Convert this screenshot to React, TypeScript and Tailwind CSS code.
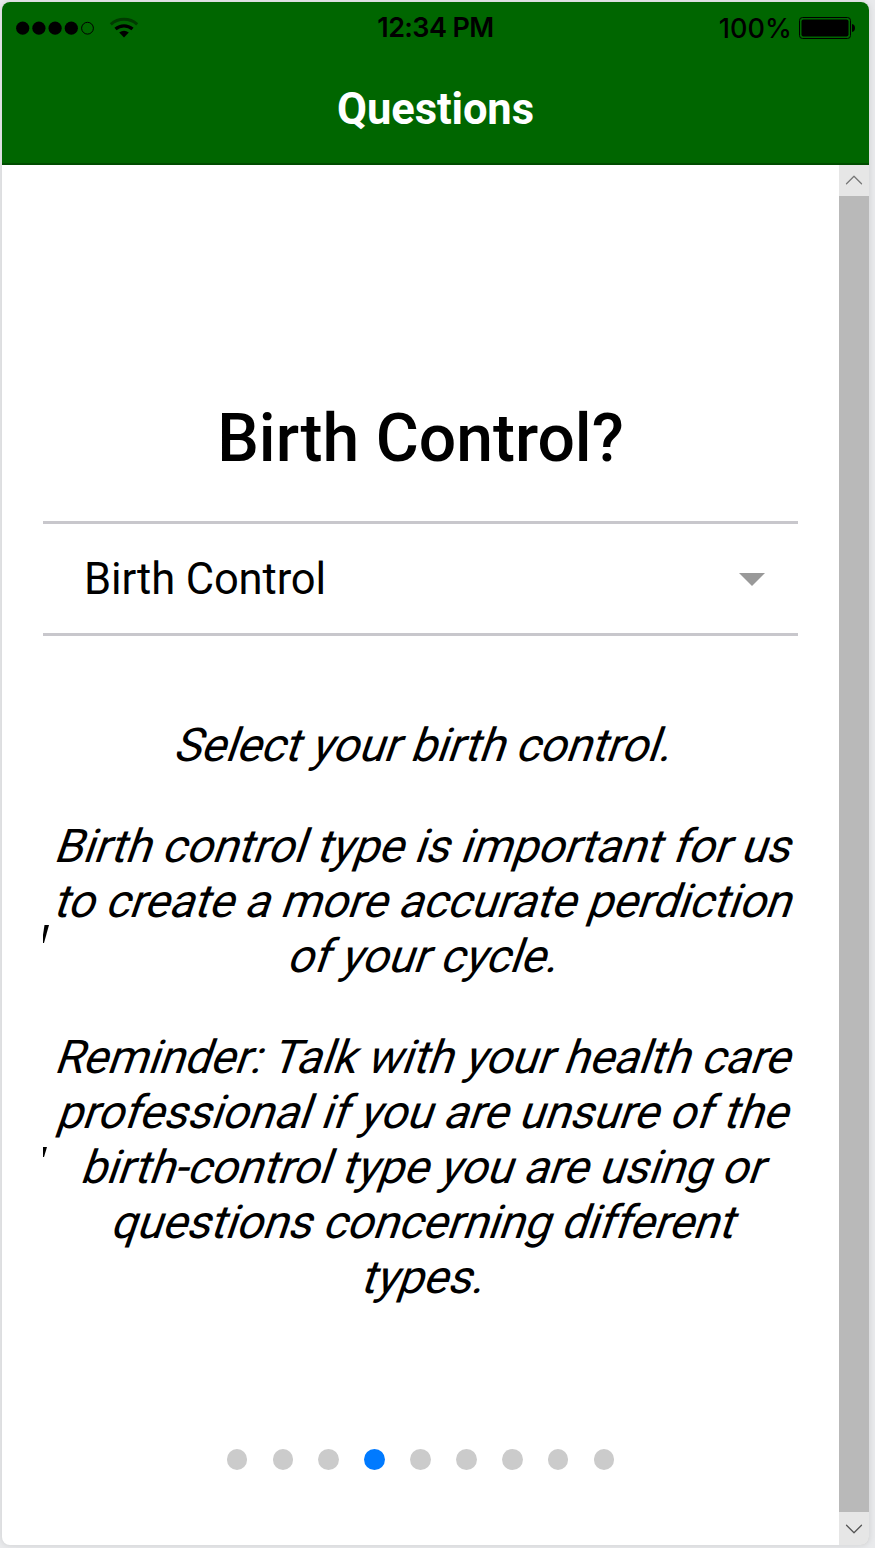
import { ChevronDown, ChevronUp } from "lucide-react";

const paragraphs = [
  ["Select your birth control."],
  ["Birth control type is important for us", "to create a more accurate perdiction", "of your cycle."],
  [
    "Reminder: Talk with your health care",
    "professional if you are unsure of the",
    "birth-control type you are using or",
    "questions concerning different",
    "types.",
  ],
];

function Signal() {
  return (
    <svg width="124" height="24" viewBox="0 0 124 24" className="block">
      {[6.7, 22.9, 39.1, 55.3].map((x) => (
        <circle key={x} cx={x} cy="12.2" r="6.6" fill="#000" />
      ))}
      <circle cx="71.5" cy="12.2" r="5.9" fill="none" stroke="#000" strokeWidth="1" />
      <path d="M94.8 8.3A20 20 0 0 1 121.2 8.3" fill="none" stroke="#003b00" strokeWidth="3" />
      <path d="M99.5 13A13 13 0 0 1 116.5 13" fill="none" stroke="#000" strokeWidth="3.2" />
      <path d="M103.2 16.6Q108 13 112.8 16.6L108 21.6Z" fill="#000" />
    </svg>
  );
}

function Battery() {
  return (
    <svg width="58" height="24" viewBox="0 0 58 24" className="block">
      <rect x="0.5" y="1.5" width="51" height="21" rx="3" fill="none" stroke="#000" />
      <rect x="2.5" y="3.5" width="47" height="17" rx="2" fill="#000" />
      <path d="M53 8Q56 8.5 56 12T53 16Z" fill="#000" />
    </svg>
  );
}

export default function App() {
  return (
    <div className="h-[1548px] w-[875px] overflow-hidden bg-[#e9eaec] pt-[2px] pl-[2px] font-[Roboto,sans-serif] text-black">
      <div className="flex h-[1543px] w-[867px] flex-col overflow-hidden rounded-[8px] bg-white shadow-[0_0_6px_rgba(0,0,0,0.12)]">
        <header className="h-[163px] shrink-0 border-b-2 border-[#004c00] bg-[#006600]">
          <div className="grid h-[52px] grid-cols-3 items-center pr-[12px] pl-[14px] font-[Inter,sans-serif]">
            <Signal />
            <div className="pr-[2px] text-center text-[27px] leading-[52px] font-semibold tracking-[-0.6px] whitespace-nowrap">12:34 PM</div>
            <div className="flex items-center justify-end gap-[7px]">
              <span className="translate-y-px text-[27px] leading-[52px] font-medium tracking-[0.1px]">100%</span>
              <Battery />
            </div>
          </div>
          <h1 className="pt-[28px] text-center text-[43.5px] leading-[56px] font-bold tracking-[-0.1px] text-white">Questions</h1>
        </header>
        <div className="flex min-h-0 flex-1">
          <main className="flex w-[837px] flex-col px-[41px]">
            <h2 className="mt-[232px] text-center text-[66px] leading-[84px] font-medium">Birth Control?</h2>
            <button className="mt-[40px] flex h-[115px] w-full items-center justify-between border-y-[3px] border-[#c8c7cc] pr-[33px] pl-[41px]">
              <span className="translate-y-px text-[43.5px] leading-[52px] tracking-[-0.12px]">Birth Control</span>
              <svg width="26" height="13" viewBox="0 0 26 13" className="mt-px">
                <path d="M0 0H26L13 13Z" fill="#999" />
              </svg>
            </button>
            <div className="relative mt-[82px] flex flex-col gap-[46px] text-center text-[46.5px] leading-[55px] tracking-[-0.28px]">
              {paragraphs.map((lines) => (
                <p key={lines[0]}>
                  {lines.map((line) => (
                    <span key={line} className="flex origin-[50%_79%] -skew-x-[19deg] justify-center whitespace-nowrap">
                      {line}
                    </span>
                  ))}
                </p>
              ))}
              <svg width="8" height="240" viewBox="0 0 8 240" className="absolute top-[200px] left-0">
                <path d="M1.5 7H6L1 25H0V17Z" />
                <path d="M0 229H4L1 239H0Z" />
              </svg>
            </div>
            <nav className="mt-[144px] flex justify-center gap-[25.4px]">
              {[0, 1, 2, 3, 4, 5, 6, 7, 8].map((i) => (
                <span key={i} className={i === 3 ? "h-[21px] w-[20.5px] rounded-full bg-[#007aff]" : "h-[21px] w-[20.5px] rounded-full bg-[#cbcbcb]"} />
              ))}
            </nav>
          </main>
          <aside className="flex w-[30px] flex-col bg-[#b9b9b9]">
            <div className="flex h-[31px] items-center justify-center bg-[#e6e6e6]">
              <ChevronUp className="mb-px h-[30px] w-[30px] text-[#777]" strokeWidth={1} />
            </div>
            <div className="flex-1" />
            <div className="flex h-[33px] items-center justify-center bg-[#e6e6e6]">
              <ChevronDown className="h-[30px] w-[30px] text-[#555]" strokeWidth={1} />
            </div>
          </aside>
        </div>
      </div>
    </div>
  );
}
